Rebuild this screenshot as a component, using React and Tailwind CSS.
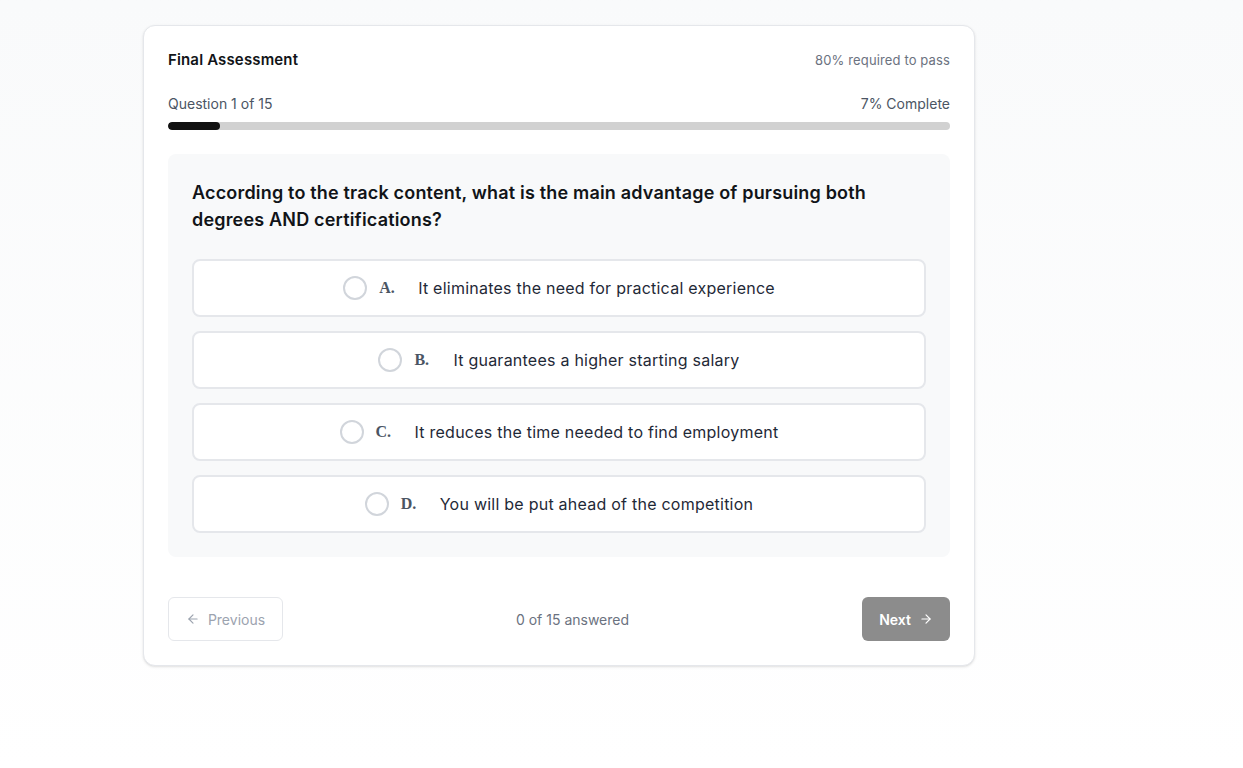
import { ArrowLeft, ArrowRight } from "lucide-react";

const options = [
  { key: "A.", text: "It eliminates the need for practical experience" },
  { key: "B.", text: "It guarantees a higher starting salary" },
  { key: "C.", text: "It reduces the time needed to find employment" },
  { key: "D.", text: "You will be put ahead of the competition" },
];

export default function App() {
  return (
    <div
      className="min-h-screen bg-gradient-to-b from-[#f9fafb] to-white text-[#111418]"
      style={{ fontFamily: 'Inter, "Noto Sans", sans-serif' }}
    >
      <div className="pt-[25px] pl-[143px]">
        <div className="w-[832px] rounded-xl border border-[#e5e7eb] bg-white p-6 shadow-sm">
          <div className="flex items-center justify-between">
            <p className="text-[15px] font-semibold leading-5 tracking-[0.01em]">Final Assessment</p>
            <p className="text-[13px] leading-5 text-[#6b7280] tracking-[0.01em]">80% required to pass</p>
          </div>

          <div className="mt-6 flex items-center justify-between text-[14px] leading-5 text-[#4b5563]">
            <span>Question 1 of 15</span>
            <span>7% Complete</span>
          </div>
          <div className="mt-2 h-2 w-full overflow-hidden rounded-full bg-[#d1d1d1]">
            <div className="h-full w-[6.7%] rounded-full bg-[#111111]"></div>
          </div>

          <div className="mt-6 rounded-lg bg-[#f8f9fa] p-6">
            <h2 className="pt-[1px] text-[18px] font-semibold leading-[27px] tracking-[0.01em]">
              According to the track content, what is the main advantage of pursuing both
              degrees AND certifications?
            </h2>
            <div className="mt-[26px] flex flex-col gap-[14px]">
              {options.map((o) => (
                <button
                  key={o.key}
                  className="flex h-[58px] w-full items-center justify-center rounded-lg border-2 border-[#e5e7eb] bg-white"
                >
                  <span className="h-6 w-6 rounded-full border-2 border-[#d1d5db]"></span>
                  <span
                    className="ml-3 w-[39px] text-left text-[16px] font-bold text-[#4b5563]"
                    style={{ fontFamily: '"Liberation Serif", serif' }}
                  >
                    {o.key}
                  </span>
                  <span className="text-[16px] tracking-[0.015em] text-[#1f2937]">{o.text}</span>
                </button>
              ))}
            </div>
          </div>

          <div className="mt-10 flex items-center justify-between">
            <button className="flex h-11 w-[115px] items-center justify-center gap-2 rounded-md border border-[#e5e7eb] text-[14px] text-[#9ca3af]">
              <ArrowLeft size={14} />
              Previous
            </button>
            <span className="text-[14px] text-[#6b7280]">0 of 15 answered</span>
            <button className="flex h-11 w-[88px] items-center justify-center gap-2 rounded-md bg-[#8c8c8c] text-[14px] font-semibold text-white">
              Next
              <ArrowRight size={14} />
            </button>
          </div>
        </div>
      </div>
    </div>
  );
}
